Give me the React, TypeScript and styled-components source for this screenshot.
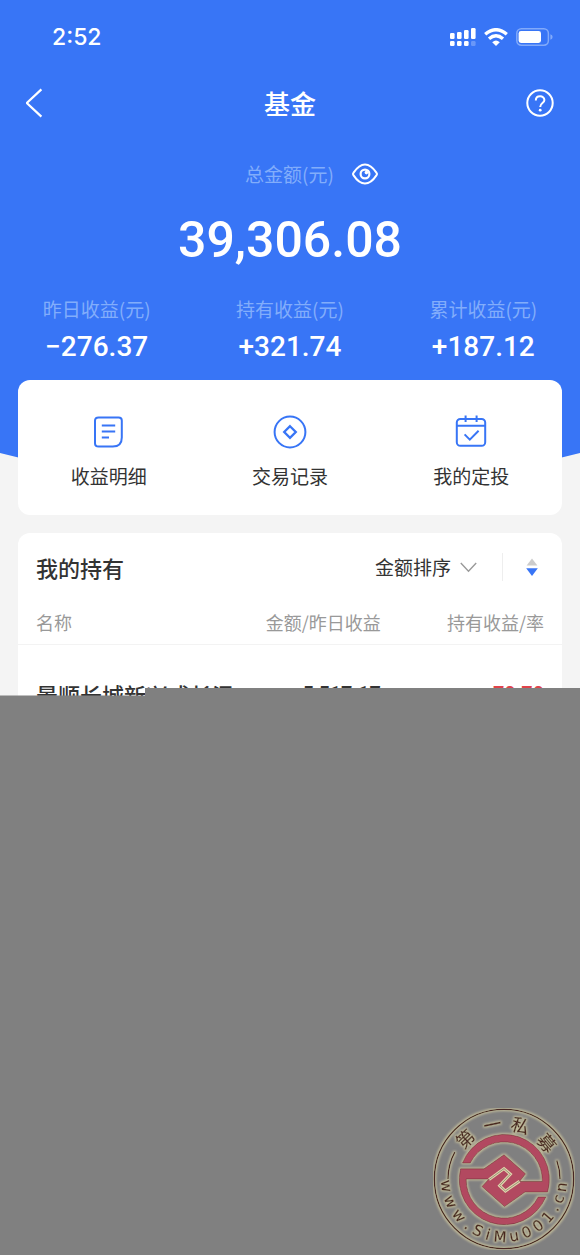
import React from "react";
import styled, { createGlobalStyle } from "styled-components";

const blue = "#3875f6";
const sans = `"Liberation Sans", "Noto Sans CJK SC", sans-serif`;
const cjk = `"Noto Sans CJK SC", sans-serif`;
const digits = `Roboto, "Noto Sans CJK SC", sans-serif`;

const GlobalStyle = createGlobalStyle`
  * { box-sizing: border-box; }
  body { margin: 0; background: #f4f4f4; font-family: ${cjk}; color: #333; }
  h1, h2, p, dl, dt, dd { margin: 0; }
  button, select { font: inherit; color: inherit; background: none; border: 0; padding: 0; cursor: pointer; }
  svg { display: block; }
`;

const Page = styled.div`
  display: flex;
  flex-direction: column;
  min-height: 100vh;
`;

const Hero = styled.header`
  background: ${blue};
  color: #fff;
  padding-bottom: 116px;
  clip-path: polygon(0 0, 100% 0, 100% calc(100% - 27px), calc(100% - 110px) 100%, 110px 100%, 0 calc(100% - 27px));
`;

const StatusBar = styled.div`
  display: flex;
  align-items: center;
  justify-content: space-between;
  height: 74px;
  padding: 0 27px 0 52px;
`;

const Clock = styled.time`
  font: 500 23px/28px Inter, ${sans};
`;

const StatusIcons = styled.div`
  display: flex;
  align-items: center;
  gap: 8px;
`;

const NavBar = styled.nav`
  display: flex;
  align-items: center;
  justify-content: space-between;
  height: 58px;
  padding: 0 26px;
`;

const NavTitle = styled.h1`
  font-size: 26px;
  line-height: 36px;
  font-weight: 500;
`;

const IconButton = styled.button`
  display: flex;
  align-items: center;
  width: 28px;
  height: 40px;
`;

const Balance = styled.section`
  display: flex;
  flex-direction: column;
  align-items: center;
  padding-top: 28px;
`;

const BalanceLabel = styled.div`
  display: flex;
  align-items: center;
  gap: 18px;
  padding-left: 43px;
`;

const Caption = styled.span`
  color: #82adfb;
  font-size: 19px;
  line-height: 28px;
  font-weight: 400;
`;

const Total = styled.p`
  font: 500 50px/60px ${digits};
  margin-top: 22px;
`;

const Stats = styled.dl`
  display: grid;
  grid-template-columns: repeat(3, 1fr);
  text-align: center;
  margin-top: 25px;
`;

const StatValue = styled.dd`
  font: 500 28px/34px ${digits};
  margin-top: 7px;
`;

const Card = styled.section`
  background: #fff;
  border-radius: 12px;
  margin: 0 18px;
`;

const ActionCard = styled(Card)`
  position: relative;
  display: grid;
  grid-template-columns: repeat(3, 1fr);
  margin-top: -100px;
  padding: 32px 0 25px;
`;

const Action = styled.button`
  display: flex;
  flex-direction: column;
  align-items: center;
  gap: 10px;
  font-size: 19px;
  line-height: 28px;
`;

const HoldingsCard = styled(Card)`
  margin-top: 18px;
  border-radius: 12px 12px 0 0;
`;

const HoldingsHead = styled.div`
  display: flex;
  align-items: center;
  height: 68px;
  padding: 0 24px 0 18px;
`;

const HoldingsTitle = styled.h2`
  flex: 1;
  font-size: 22px;
  line-height: 32px;
  font-weight: 500;
`;

const SortField = styled.label`
  display: flex;
  align-items: center;
  gap: 8px;
  padding-right: 25px;
  border-right: 1px solid #eee;
`;

const SortSelect = styled.select`
  appearance: none;
  font-size: 19px;
  line-height: 28px;
  outline: none;
`;

const SortButton = styled.button`
  padding-left: 23px;
`;

const Table = styled.table`
  width: 100%;
  border-collapse: collapse;
  table-layout: fixed;
`;

const HeadCell = styled.th<{ $width: string; $end?: boolean }>`
  width: ${(p) => p.$width};
  height: 43px;
  padding: 0 18px;
  border-bottom: 1px solid #f3f3f3;
  color: #999;
  font-size: 18px;
  line-height: 26px;
  font-weight: 400;
  white-space: nowrap;
  text-align: ${(p) => (p.$end ? "right" : "left")};
`;

const NameCell = styled.td`
  padding: 33px 0 0 18px;
  font-size: 22px;
  line-height: 32px;
  font-weight: 500;
  white-space: nowrap;
  vertical-align: top;
`;

const NumberCell = styled.td<{ $gain?: boolean }>`
  padding: 35px 18px 0;
  font: 500 20px/28px ${digits};
  text-align: right;
  vertical-align: top;
  color: ${(p) => (p.$gain ? "#e0434b" : "#333")};
`;

const Cover = styled.footer`
  position: relative;
  flex: 1;
  display: flex;
  align-items: flex-end;
  justify-content: flex-end;
  min-height: 400px;
  margin-top: -22px;
  padding: 0 5px 5px;
  background: #808080;
  clip-path: polygon(0 8px, 145px 8px, 145px 0, 100% 0, 100% 100%, 0 100%);
`;

const SignalIcon = () => (
  <svg width="26" height="20" viewBox="0 0 26 20" fill="#fff" aria-hidden="true">
    <rect x="0" y="6" width="4.6" height="6" rx="1.3" />
    <rect x="7" y="5" width="4.6" height="7" rx="1.3" />
    <rect x="14" y="3" width="4.6" height="9" rx="1.3" />
    <rect x="21" y="1" width="4.6" height="11" rx="1.3" />
    <rect x="0" y="14" width="4.6" height="5" rx="1.3" />
    <rect x="7" y="14" width="4.6" height="5" rx="1.3" />
    <rect x="14" y="14" width="4.6" height="5" rx="1.3" />
    <rect x="21" y="14" width="4.6" height="5" rx="1.3" opacity="0.25" />
  </svg>
);

const WifiIcon = () => (
  <svg width="24" height="18" viewBox="0 0 24 18" fill="none" stroke="#fff" strokeWidth="3.4" aria-hidden="true">
    <path d="M1.2 6.2 Q12 -2.8 22.8 6.2" />
    <path d="M5 10.8 Q12 4.8 19 10.8" />
    <path d="M12 18 L8.2 14.2 Q12 11 15.8 14.2Z" fill="#fff" stroke="none" />
  </svg>
);

const BatteryIcon = () => (
  <svg width="37" height="18" viewBox="0 0 37 18" aria-hidden="true">
    <rect x="0.8" y="0.8" width="31.6" height="16.4" rx="4.6" fill="none" stroke="#82aafa" strokeWidth="1.5" />
    <rect x="2.6" y="3" width="22.4" height="12" rx="2.4" fill="#fff" />
    <path d="M34.4 6.2 Q36.6 7 36.6 9 T34.4 11.8Z" fill="#82aafa" />
  </svg>
);

const BackIcon = () => (
  <svg width="18" height="30" viewBox="2 0 18 30" fill="none" stroke="#fff" strokeWidth="2.2" aria-hidden="true">
    <path d="M17.4 1.4 L2.8 15 L17.4 28.6" />
  </svg>
);

const HelpIcon = () => (
  <svg width="28" height="28" viewBox="0 0 28 28" fill="none" stroke="#fff" strokeWidth="2" aria-hidden="true">
    <circle cx="14" cy="14" r="12.7" />
    <path d="M9.8 11.4 C9.8 5.8 18.4 6 18.4 11 C18.4 14.2 14.2 14 14.2 18" />
    <circle cx="14.2" cy="21.2" r="1.4" fill="#fff" stroke="none" />
  </svg>
);

const EyeIcon = () => (
  <svg width="26" height="22" viewBox="0 0 26 22" fill="none" stroke="#fff" strokeWidth="2" aria-hidden="true">
    <path d="M1.6 12.4 Q0.5 11 1.6 9.6 Q7 1.4 13 1.4 T24.4 9.6 Q25.5 11 24.4 12.4 Q19 20.6 13 20.6 T1.6 12.4Z" />
    <circle cx="13" cy="11" r="4.4" strokeWidth="2.2" />
    <circle cx="14.4" cy="9.6" r="1.8" fill="#fff" stroke="none" />
  </svg>
);

const DetailIcon = () => (
  <svg width="40" height="40" viewBox="0 0 40 40" fill="none" stroke={blue} strokeWidth="2" aria-hidden="true">
    <path d="M9.6 5.4 H29.6 Q32.8 5.4 32.8 8.6 V25.6 Q32.8 34.6 23.8 34.6 H9.6 Q6 34.6 6 31.2 V8.8 Q6 5.4 9.6 5.4Z" />
    <path d="M12.8 13.6 H26.2 M12.8 19.6 H26.2 M12.8 25.6 H20" />
  </svg>
);

const RecordIcon = () => (
  <svg width="40" height="40" viewBox="0 0 40 40" fill="none" stroke={blue} strokeWidth="2" aria-hidden="true">
    <circle cx="20" cy="20" r="15.4" />
    <path d="M20 14.2 L25.8 20 L20 25.8 L14.2 20Z" strokeWidth="2.3" />
  </svg>
);

const PlanIcon = () => (
  <svg width="40" height="40" viewBox="0 0 40 40" fill="none" stroke={blue} strokeWidth="2" aria-hidden="true">
    <rect x="5.8" y="7" width="28.4" height="26.8" rx="3.6" />
    <path d="M5.8 13.8 H34.2 M14.6 3.6 V10 M25.6 3.6 V10" />
    <path d="M13.6 22.4 L18.8 27.6 L27.6 18.8" />
  </svg>
);

const ChevronIcon = () => (
  <svg width="17" height="11" viewBox="0 0 17 11" fill="none" stroke="#999" strokeWidth="1.4" aria-hidden="true">
    <path d="M0.8 1 L8.5 9.2 L16.2 1" />
  </svg>
);

const OrderIcon = () => (
  <svg width="12" height="20" viewBox="0 0 12 20" aria-hidden="true">
    <path d="M0.6 8.4 L6 1.4 L11.4 8.4Z" fill="#ccc" />
    <path d="M0.2 11.2 H11.8 L6 19Z" fill={blue} />
  </svg>
);

type SealLetter = [text: string, angle: number];

const sealTop: SealLetter[] = [["第", -44], ["一", -12], ["私", 17], ["募", 50]];

const sealBottom: SealLetter[] = [
  ["w", 83], ["w", 67], ["w", 51], [".", 38], ["S", 27], ["i", 16], ["M", 4],
  ["u", -10], ["0", -23], ["0", -36], ["1", -49], [".", -60], ["c", -70], ["n", -82],
];

const Seal = () => (
  <svg width="142" height="142" viewBox="0 0 142 142" role="img" aria-label="第一私募 www.SiMu001.cn">
    <defs>
      <filter id="halo" x="-10%" y="-10%" width="120%" height="120%">
        <feMorphology in="SourceAlpha" operator="dilate" radius="1" result="wide" />
        <feGaussianBlur in="wide" stdDeviation="1.3" result="soft" />
        <feFlood floodColor="#d8d0a4" floodOpacity="0.75" />
        <feComposite in2="soft" operator="in" result="glow" />
        <feMerge>
          <feMergeNode in="glow" />
          <feMergeNode in="SourceGraphic" />
        </feMerge>
      </filter>
    </defs>
    <g filter="url(#halo)">
      <g fill="none" stroke="#4a2620" strokeWidth="1.4">
        <circle cx="71" cy="71" r="69.6" />
        <path d="M15 71 A56 56 0 0 1 21.8 44.2" />
        <path d="M127 71 A56 56 0 0 0 123.8 52.4" />
      </g>
      <g fill="#4a2620" stroke="#4a2620" strokeWidth="0.3" textAnchor="middle">
        {sealTop.map(([text, angle]) => (
          <text key={angle} x="71" y="22" transform={`rotate(${angle} 71 71)`} fontFamily={cjk} fontSize="18">
            {text}
          </text>
        ))}
        {sealBottom.map(([text, angle]) => (
          <text key={angle} x="71" y="134" transform={`rotate(${angle} 71 71)`} fontFamily="DejaVu Sans" fontSize="15">
            {text}
          </text>
        ))}
      </g>
      <path
        d="M29.5 55 A45 45 0 0 1 114.6 84 H92 L71.5 98.5 L49 78.5 L56 71 H33.2
           A38 38 0 0 0 105.2 89 H112.8 A45 45 0 0 1 27.6 60.8 H51 L71 46.8 L92.5 65.8 L86.5 73.5 H109.2
           A38 38 0 0 0 37.2 55 Z"
        fill="#b24a60"
        stroke="#7a2c3e"
        strokeWidth="0.7"
      />
    </g>
    <g fill="none" strokeLinejoin="miter">
      <path d="M56 71.6 L71 60.6 L77.4 66.2 L66.6 77.6 L72.4 83 L86.5 73.2" stroke="#ded5ab" strokeWidth="3" />
      <path d="M56 71.6 L71 60.6 L77.4 66.2 L66.6 77.6 L72.4 83 L86.5 73.2" stroke="#8a7f6c" strokeWidth="0.8" />
    </g>
  </svg>
);

const funds = [{ name: "景顺长城新兴成长混", amount: "5,517.17", gain: "70.70" }];

export default function App() {
  return (
    <Page>
      <GlobalStyle />
      <Hero>
        <StatusBar>
          <Clock>2:52</Clock>
          <StatusIcons>
            <SignalIcon />
            <WifiIcon />
            <BatteryIcon />
          </StatusIcons>
        </StatusBar>
        <NavBar>
          <IconButton aria-label="返回"><BackIcon /></IconButton>
          <NavTitle>基金</NavTitle>
          <IconButton aria-label="帮助"><HelpIcon /></IconButton>
        </NavBar>
        <Balance>
          <BalanceLabel>
            <Caption>总金额(元)</Caption>
            <button aria-label="隐藏金额"><EyeIcon /></button>
          </BalanceLabel>
          <Total>39,306.08</Total>
        </Balance>
        <Stats>
          <div><Caption as="dt">昨日收益(元)</Caption><StatValue>−276.37</StatValue></div>
          <div><Caption as="dt">持有收益(元)</Caption><StatValue>+321.74</StatValue></div>
          <div><Caption as="dt">累计收益(元)</Caption><StatValue>+187.12</StatValue></div>
        </Stats>
      </Hero>
      <ActionCard>
        <Action><DetailIcon />收益明细</Action>
        <Action><RecordIcon />交易记录</Action>
        <Action><PlanIcon />我的定投</Action>
      </ActionCard>
      <HoldingsCard>
        <HoldingsHead>
          <HoldingsTitle>我的持有</HoldingsTitle>
          <SortField>
            <SortSelect aria-label="排序方式"><option>金额排序</option></SortSelect>
            <ChevronIcon />
          </SortField>
          <SortButton aria-label="切换升降序"><OrderIcon /></SortButton>
        </HoldingsHead>
        <Table>
          <thead>
            <tr>
              <HeadCell $width="36%">名称</HeadCell>
              <HeadCell $width="34%" $end>金额/昨日收益</HeadCell>
              <HeadCell $width="30%" $end>持有收益/率</HeadCell>
            </tr>
          </thead>
          <tbody>
            {funds.map((f) => (
              <tr key={f.name}>
                <NameCell>{f.name}</NameCell>
                <NumberCell>{f.amount}</NumberCell>
                <NumberCell $gain>{f.gain}</NumberCell>
              </tr>
            ))}
          </tbody>
        </Table>
      </HoldingsCard>
      <Cover><Seal /></Cover>
    </Page>
  );
}
